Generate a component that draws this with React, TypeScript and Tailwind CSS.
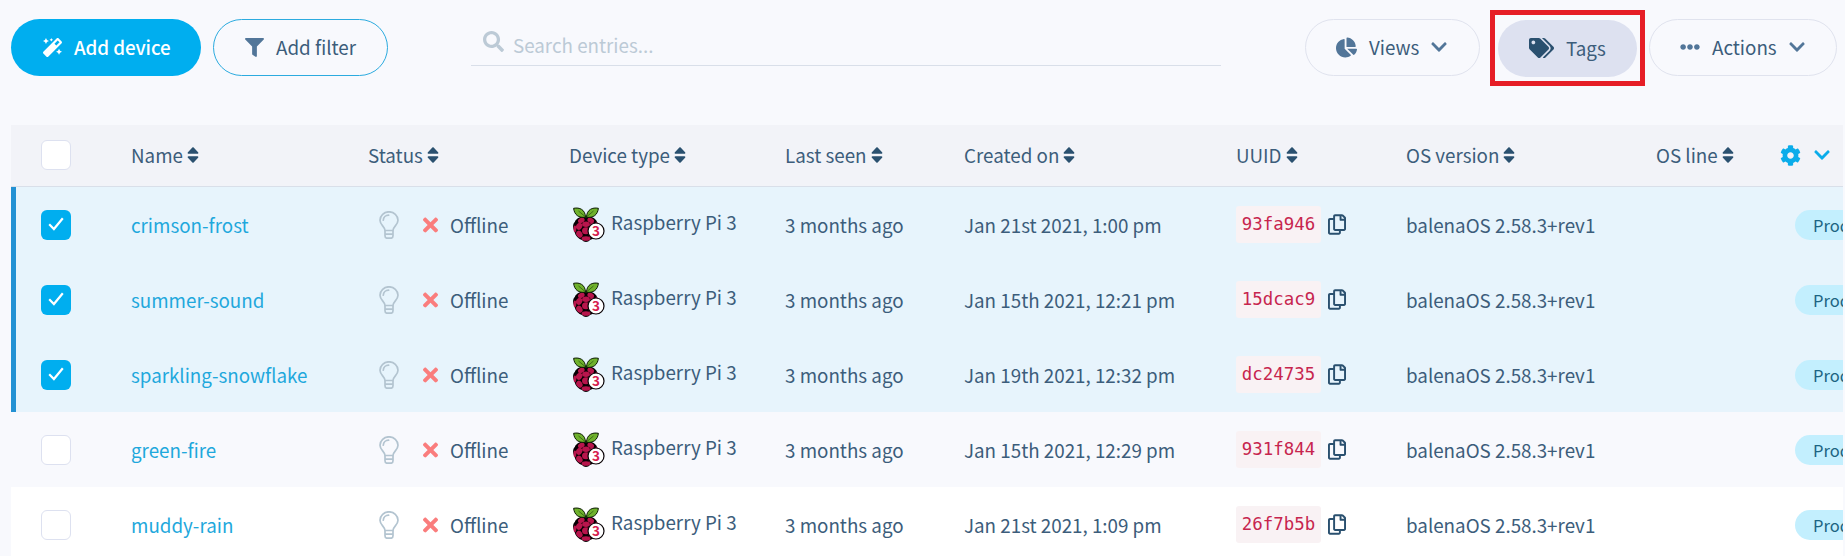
import type { ReactNode } from 'react';
import {
  FaChartPie,
  FaChevronDown,
  FaCog,
  FaEllipsisH,
  FaFilter,
  FaMagic,
  FaRegCopy,
  FaSearch,
  FaSort,
  FaTags,
  FaTimes,
} from 'react-icons/fa';

const COLS =
  'grid grid-cols-[120px_237px_201px_216px_179px_272px_170px_250px_minmax(0,1fr)] items-center';

const devices = [
  { name: 'crimson-frost', created: 'Jan 21st 2021, 1:00 pm', uuid: '93fa946', selected: true },
  { name: 'summer-sound', created: 'Jan 15th 2021, 12:21 pm', uuid: '15dcac9', selected: true },
  { name: 'sparkling-snowflake', created: 'Jan 19th 2021, 12:32 pm', uuid: 'dc24735', selected: true },
  { name: 'green-fire', created: 'Jan 15th 2021, 12:29 pm', uuid: '931f844', selected: false },
  { name: 'muddy-rain', created: 'Jan 21st 2021, 1:09 pm', uuid: '26f7b5b', selected: false },
];

function Bulb() {
  return (
    <svg className="h-[28px] w-[20px] shrink-0" viewBox="0 0 20 28" fill="none" stroke="#b3c4d0" strokeWidth="1.7">
      <path d="M6 19.500C6 15.500 1 14 1 9.300a9 8.500 0 0 1 18 0C19 14 14 15.500 14 19.500Z" strokeLinejoin="round" />
      <path d="M4.300 9.200A5.400 5.200 0 0 1 9.600 4.200" strokeLinecap="round" />
      <path d="M6 19.500v5.200c0 1.500.6 2.500 2 2.500h4c1.400 0 2-1 2-2.500v-5.200M6 23.200h8" />
    </svg>
  );
}

function Raspberry() {
  return (
    <svg className="h-[36px] w-[33px] shrink-0" viewBox="0 0 33 36">
      <path
        d="M14 9C18 9 24 11 25 15c2 2 2.500 6 1 9-.5 5-5 8-8 9-2 2.500-6 2.500-8 0-3-1-7-4-7.500-9C.5 21 .6 17 2.800 15 4 11 10 9 14 9Z"
        fill="#080004"
      />
      <g fill="#b8154c">
        <ellipse cx="9.300" cy="13.400" rx="3.500" ry="2.500" transform="rotate(-30 9.300 13.400)" />
        <ellipse cx="18.700" cy="13.400" rx="3.500" ry="2.500" transform="rotate(30 18.700 13.400)" />
        <ellipse cx="14" cy="17.200" rx="3.800" ry="2.700" />
        <ellipse cx="7.200" cy="19.300" rx="3" ry="3.600" transform="rotate(35 7.200 19.300)" />
        <ellipse cx="20.800" cy="19" rx="3" ry="3.600" transform="rotate(-35 20.800 19)" />
        <ellipse cx="14" cy="23.700" rx="4" ry="3.500" />
        <ellipse cx="2.900" cy="21.800" rx="1.400" ry="3.400" />
        <ellipse cx="7.400" cy="27.200" rx="2.900" ry="3.700" transform="rotate(-35 7.400 27.200)" />
        <ellipse cx="20" cy="27" rx="2.700" ry="3.600" transform="rotate(35 20 27)" />
        <ellipse cx="24.500" cy="17.500" rx="1.200" ry="2.500" />
        <ellipse cx="14" cy="31.500" rx="4.300" ry="2.300" />
      </g>
      <path d="M13.600 10.200C6.500 11.200 2.400 7.800 1.600 1.300 7.500.2 13 2.300 13.600 10.200Z" fill="#6fb12c" stroke="#0c1a04" strokeWidth="1" />
      <path d="M14.400 10.200C21.500 11.200 25.600 7.800 26.400 1.300 20.500.2 15 2.300 14.400 10.200Z" fill="#6fb12c" stroke="#0c1a04" strokeWidth="1" />
      <path d="M13.600 10 6.500 4M14.400 10 21.500 4" stroke="#2f5a12" strokeWidth=".8" />
      <circle cx="24" cy="24" r="8" fill="#fff" stroke="#080004" strokeWidth="1.200" />
      <text x="24" y="28.900" textAnchor="middle" fontSize="13.500" fontWeight="700" fill="#d6204e">
        3
      </text>
    </svg>
  );
}

function Checkbox({ checked }: { checked: boolean }) {
  return checked ? (
    <span className="flex size-[30px] items-center justify-center rounded-[6px] bg-[#00aeef]">
      <svg className="size-[18px]" viewBox="0 0 18 18" fill="none" stroke="#fff" strokeWidth="2.200">
        <path d="M2.200 8.300 6.900 13 15.800 2.300" />
      </svg>
    </span>
  ) : (
    <span className="size-[30px] rounded-[6px] border border-[#dde1f0] bg-white" />
  );
}

function Header({ children }: { children: ReactNode }) {
  return (
    <span className="flex items-center gap-[4px] pb-[1px]">
      {children}
      <FaSort className="h-[20px] w-[12px] text-[#2a506f]" preserveAspectRatio="none" />
    </span>
  );
}

export default function App() {
  return (
    <div className="h-[556px] w-[1845px] overflow-hidden bg-[#f8f9fd] pr-[2px] pl-[11px] font-['Noto_Sans_CJK_SC',sans-serif] text-[18.8px] leading-[28px] whitespace-nowrap text-[#3c5d7b]">
      <div className="flex h-[124.5px] items-start pt-[10px]">
        <button className="mt-[9px] flex h-[57px] w-[190px] items-center rounded-full bg-[#00aeef] pb-[1px] pl-[32px] font-medium tracking-[-0.1px] text-white">
          <FaMagic className="mr-[12px] size-[19px]" />
          Add device
        </button>
        <button className="mt-[9px] ml-[12px] flex h-[57px] w-[175px] items-center rounded-full border border-[#2cabdf] pb-[1px] pl-[31px]">
          <FaFilter className="mr-[12px] size-[19px] text-[#527699]" />
          Add filter
        </button>
        <div className="mt-[13px] ml-[83px] flex h-[43px] w-[750px] items-start border-b border-[#d9dfe9] pl-[12px] text-[#bccad6]">
          <FaSearch className="mt-[8px] size-[21px]" />
          <span className="ml-[9px] pt-[8px]">Search entries...</span>
        </div>
        <button className="mt-[9px] ml-[84px] flex h-[57px] w-[175px] items-center rounded-full border border-[#e0e3ee] pb-[1px] pl-[30px]">
          <FaChartPie className="mr-[12px] size-[21px] text-[#527699]" />
          Views
          <FaChevronDown className="ml-[11px] size-[18px] text-[#527699]" />
        </button>
        <div className="ml-[10px] flex h-[76px] w-[155px] items-center justify-center border-[5px] border-[#e61e26]">
          <button className="flex h-[57px] w-[139px] items-center rounded-full bg-[#dde1f0] pb-[1px] pl-[31px]">
            <FaTags className="mr-[12px] h-[20px] w-[25px] text-[#2a506f]" />
            Tags
          </button>
        </div>
        <button className="mt-[9px] ml-[4px] flex h-[57px] w-[188px] items-center rounded-full border border-[#e0e3ee] pb-[1px] pl-[30px]">
          <FaEllipsisH className="mr-[12px] size-[20px] text-[#527699]" />
          Actions
          <FaChevronDown className="ml-[11px] size-[18px] text-[#527699]" />
        </button>
      </div>

      <div className={`${COLS} h-[62.5px] border-b border-[#d9dfe9] bg-[#f2f3f8]`}>
        <span className="flex pl-[30px]">
          <Checkbox checked={false} />
        </span>
        <Header>Name</Header>
        <Header>Status</Header>
        <Header>Device type</Header>
        <Header>Last seen</Header>
        <Header>Created on</Header>
        <Header>UUID</Header>
        <Header>OS version</Header>
        <span className="flex items-center">
          <Header>OS line</Header>
          <FaCog className="ml-[46px] size-[21px] shrink-0 text-[#0aacea]" />
          <FaChevronDown className="ml-[12px] size-[18px] shrink-0 text-[#0aacea]" />
        </span>
      </div>

      {devices.map((d, i) => (
        <div
          key={d.name}
          className={`${COLS} relative h-[75px] overflow-hidden ${d.selected ? 'bg-[#e7f4fc]' : i % 2 ? 'bg-[#f8f9fd]' : 'bg-white'}`}
        >
          {d.selected && <span className="absolute inset-y-0 left-0 w-[5px] bg-[#2391d3]" />}
          <span className="flex pl-[30px]">
            <Checkbox checked={d.selected} />
          </span>
          <a className="text-[#1fa8dc]">{d.name}</a>
          <span className="flex items-center pl-[11px]">
            <Bulb />
            <FaTimes className="mr-[12px] ml-[24px] h-[22px] w-[15px] text-[#fa7d7d]" />
            Offline
          </span>
          <span className="flex items-center pl-[3px]">
            <Raspberry />
            <span className="ml-[6px] pb-[6px]">Raspberry Pi 3</span>
          </span>
          <span>3 months ago</span>
          <span>{d.created}</span>
          <span className="flex items-center">
            <code className="mr-[7px] flex h-[37px] w-[85px] items-center justify-center rounded-[3px] bg-[#f9f2f4] pb-[2px] font-['DejaVu_Sans_Mono',monospace] text-[17.4px] text-[#c7254e]">
              {d.uuid}
            </code>
            <FaRegCopy className="h-[21px] w-[18px] text-[#2a506f]" />
          </span>
          <span>balenaOS 2.58.3+rev1</span>
          <span className="flex pl-[139px]">
            <span className="h-[30px] w-[150px] shrink-0 rounded-full bg-[#c3effe] pl-[18px] text-[16.5px] leading-[30px] text-[#1d6482]">
              Production
            </span>
          </span>
        </div>
      ))}
    </div>
  );
}
